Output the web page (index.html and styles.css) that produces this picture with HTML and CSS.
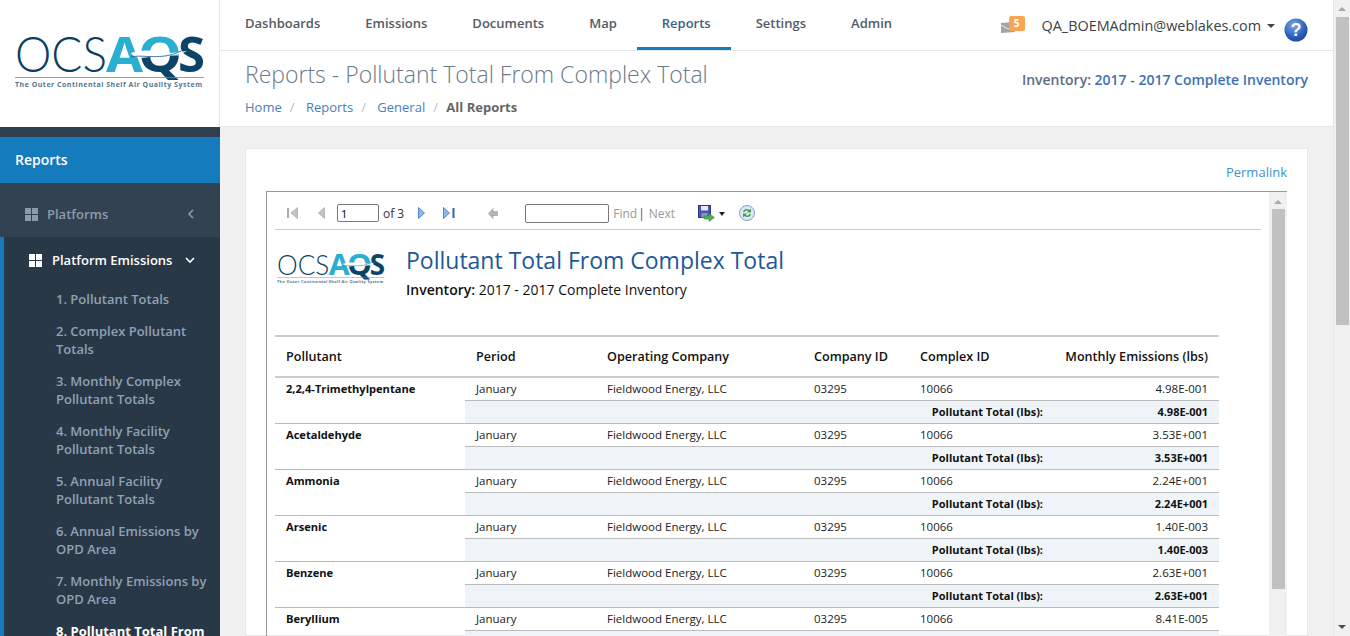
FILE: index.html
```html
<!DOCTYPE html>
<html lang="en">
<head>
  <meta charset="UTF-8" />
  <meta name="viewport" content="width=device-width, initial-scale=1" />
  <title>OCS AQS - Reports</title>
  <link rel="stylesheet" href="styles.css">
</head>
<body>
  <svg class="defs" width="0" height="0">
    <defs>
      <linearGradient id="qFill" x1="0" y1="0" x2="0" y2="1">
        <stop offset="0.55" stop-color="#2aaed2" />
        <stop offset="0.55" stop-color="#0c4467" />
      </linearGradient>
      <radialGradient id="helpFill" cx="0.4" cy="0.3" r="0.8">
        <stop offset="0" stop-color="#7fa6e6" />
        <stop offset="0.6" stop-color="#2f62bd" />
        <stop offset="1" stop-color="#173f8f" />
      </radialGradient>
      <symbol id="logo" viewBox="0 0 190 54">
        <text x="0" y="36" class="logo-ocs" textLength="92" lengthAdjust="spacingAndGlyphs">OCS</text>
        <text x="91" y="36" class="logo-a" textLength="37" lengthAdjust="spacingAndGlyphs">A</text>
        <text x="123" y="36" class="logo-q" fill="url(#qFill)" textLength="44" lengthAdjust="spacingAndGlyphs">Q</text>
        <text x="163" y="36" class="logo-s" textLength="27" lengthAdjust="spacingAndGlyphs">S</text>
        <path d="M116 17 C130 12 142 16 156 17 L172 15 C160 22 146 18 134 21 C126 23 118 21 116 17Z" fill="#fff" />
        <path d="M116 21 C128 18 146 25 166 15" fill="none" stroke="#12589a" stroke-width="0.8" />
        <rect x="0" y="41" width="189" height="0.8" fill="#6f8ba3" />
        <text x="0" y="51" class="logo-tag" textLength="187">The Outer Continental Shelf Air Quality System</text>
      </symbol>
    </defs>
  </svg>

  <div class="layout">
    <aside class="sidebar">
      <div class="brand">
        <svg class="brand-logo" width="190" height="54"><use href="#logo" /></svg>
      </div>
      <div class="side-strip"></div>
      <div class="side-title">Reports</div>
      <div class="side-group">
        <span class="tiles tiles-dim"><i></i><i></i><i></i><i></i></span>
        <span class="side-group-name">Platforms</span>
        <svg class="chev" width="8" height="10" viewBox="0 0 8 10"><path d="M6 1 L2 5 L6 9" fill="none" stroke="#8f9dab" stroke-width="1.6" /></svg>
      </div>
      <div class="side-sub">
        <div class="side-sub-head">
          <span class="tiles"><i></i><i></i><i></i><i></i></span>
          <span class="side-sub-name">Platform Emissions</span>
          <svg class="chev" width="10" height="8" viewBox="0 0 10 8"><path d="M1 2 L5 6 L9 2" fill="none" stroke="#fff" stroke-width="1.6" /></svg>
        </div>
        <a class="side-link" href="#">1. Pollutant Totals</a>
        <a class="side-link" href="#">2. Complex Pollutant Totals</a>
        <a class="side-link" href="#">3. Monthly Complex Pollutant Totals</a>
        <a class="side-link" href="#">4. Monthly Facility Pollutant Totals</a>
        <a class="side-link" href="#">5. Annual Facility Pollutant Totals</a>
        <a class="side-link" href="#">6. Annual Emissions by OPD Area</a>
        <a class="side-link" href="#">7. Monthly Emissions by OPD Area</a>
        <a class="side-link active" href="#">8. Pollutant Total From Complex Total</a>
      </div>
    </aside>

    <div class="main">
      <header class="topbar">
        <nav class="topnav">
          <a href="#">Dashboards</a>
          <a href="#">Emissions</a>
          <a href="#">Documents</a>
          <a href="#">Map</a>
          <a href="#" class="current">Reports</a>
          <a href="#">Settings</a>
          <a href="#">Admin</a>
        </nav>
        <div class="usermenu">
          <span class="mail">
            <svg width="14" height="11" viewBox="0 0 14 11"><path d="M0 1 L14 0 V10 L0 11Z" fill="#a3a3a3" /><path d="M0 3 L7 7 L14 6" fill="none" stroke="#fff" stroke-width="0.8" /></svg>
            <span class="mail-badge">5</span>
          </span>
          <span class="username">QA_BOEMAdmin@weblakes.com</span>
          <span class="caret"></span>
          <svg class="help" width="24" height="24" viewBox="0 0 24 24">
            <circle cx="12" cy="12" r="11.5" fill="url(#helpFill)" />
            <text x="12" y="18" class="help-mark">?</text>
          </svg>
        </div>
      </header>

      <div class="pagehead">
        <div>
          <h1>Reports - Pollutant Total From Complex Total</h1>
          <div class="crumbs">
            <a href="#">Home</a><span class="sep">/</span>
            <a href="#">Reports</a><span class="sep">/</span>
            <a href="#">General</a><span class="sep">/</span>
            <b>All Reports</b>
          </div>
        </div>
        <div class="inventory">Inventory: <a href="#">2017 - 2017 Complete Inventory</a></div>
      </div>

      <div class="content">
        <div class="card">
          <div class="permalink"><a href="#">Permalink</a></div>
          <div class="viewer">
            <div class="report">
              <div class="toolbar">
                <svg class="tool first" width="11" height="12" viewBox="0 0 11 12"><rect x="0" y="1" width="2" height="10" fill="#aaa" /><path d="M10.500 0.500 V11.500 L4 6Z" fill="#c4c4c4" stroke="#999" stroke-width="0.6" /></svg>
                <svg class="tool prev" width="7" height="12" viewBox="0 0 7 12"><path d="M6.500 0.500 V11.500 L0.500 6Z" fill="#c4c4c4" stroke="#999" stroke-width="0.6" /></svg>
                <input class="page-input" type="text" value="1" />
                <span class="of">of 3</span>
                <svg class="tool next" width="7" height="12" viewBox="0 0 7 12"><path d="M0.500 0.500 V11.500 L6.500 6Z" fill="#8db8f0" stroke="#2a62c0" stroke-width="0.7" /></svg>
                <svg class="tool last" width="12" height="12" viewBox="0 0 12 12"><path d="M0.500 0.500 V11.500 L6.500 6Z" fill="#8db8f0" stroke="#2a62c0" stroke-width="0.7" /><rect x="9.500" y="1" width="2" height="10" fill="#2a62c0" /></svg>
                <svg class="tool back" width="10" height="11" viewBox="0 0 10 11"><path d="M0.500 5.500 L5 0.500 V3.500 H9.500 V7.500 H5 V10.500Z" fill="#b5b5b5" stroke="#999" stroke-width="0.6" /></svg>
                <input class="find-input" type="text" />
                <span class="find">Find</span><span class="pipe">|</span><span class="find find-next">Next</span>
                <svg class="tool save" width="17" height="17" viewBox="0 0 17 17">
                  <rect x="0.500" y="0.500" width="12" height="12" fill="#4a55b0" stroke="#2d3580" />
                  <rect x="3" y="1" width="7" height="4.500" fill="#e8e8f4" />
                  <rect x="3.500" y="8" width="6" height="4.500" fill="#8a92cc" />
                  <path d="M6 11 H11 V8.500 L16.500 12.500 L11 16.500 V14 H6Z" fill="#4fb04f" stroke="#2e8030" stroke-width="0.5" />
                </svg>
                <span class="caret caret-small"></span>
                <svg class="tool refresh" width="16" height="16" viewBox="0 0 16 16">
                  <circle cx="8" cy="8" r="7.500" fill="#dbe8f8" stroke="#7f9fcf" />
                  <path d="M4 7 C4.500 4 8 3 10.500 5 L12 3.500 V7.500 H8 L9.500 6 C8 5 6 5.500 5.500 7Z" fill="#3f9f3f" />
                  <path d="M12 9 C11.500 12 8 13 5.500 11 L4 12.500 V8.500 H8 L6.500 10 C8 11 10 10.500 10.500 9Z" fill="#3f9f3f" />
                </svg>
              </div>

              <div class="report-head">
                <svg class="report-logo" width="108" height="31"><use href="#logo" /></svg>
                <div>
                  <h2>Pollutant Total From Complex Total</h2>
                  <p><b>Inventory:</b> 2017 - 2017 Complete Inventory</p>
                </div>
              </div>

              <table class="grid">
                <colgroup>
                  <col class="c-pollutant"><col class="c-period"><col class="c-company"><col class="c-cid"><col class="c-xid"><col class="c-value">
                </colgroup>
                <thead>
                  <tr><th>Pollutant</th><th>Period</th><th>Operating Company</th><th>Company ID</th><th>Complex ID</th><th class="num">Monthly Emissions (lbs)</th></tr>
                </thead>
                <tbody>
                  <tr><td class="name" rowspan="2">2,2,4-Trimethylpentane</td><td>January</td><td>Fieldwood Energy, LLC</td><td>03295</td><td>10066</td><td class="num">4.98E-001</td></tr>
                  <tr class="total"><td colspan="4">Pollutant Total (lbs):</td><td class="num">4.98E-001</td></tr>
                  <tr><td class="name" rowspan="2">Acetaldehyde</td><td>January</td><td>Fieldwood Energy, LLC</td><td>03295</td><td>10066</td><td class="num">3.53E+001</td></tr>
                  <tr class="total"><td colspan="4">Pollutant Total (lbs):</td><td class="num">3.53E+001</td></tr>
                  <tr><td class="name" rowspan="2">Ammonia</td><td>January</td><td>Fieldwood Energy, LLC</td><td>03295</td><td>10066</td><td class="num">2.24E+001</td></tr>
                  <tr class="total"><td colspan="4">Pollutant Total (lbs):</td><td class="num">2.24E+001</td></tr>
                  <tr><td class="name" rowspan="2">Arsenic</td><td>January</td><td>Fieldwood Energy, LLC</td><td>03295</td><td>10066</td><td class="num">1.40E-003</td></tr>
                  <tr class="total"><td colspan="4">Pollutant Total (lbs):</td><td class="num">1.40E-003</td></tr>
                  <tr><td class="name" rowspan="2">Benzene</td><td>January</td><td>Fieldwood Energy, LLC</td><td>03295</td><td>10066</td><td class="num">2.63E+001</td></tr>
                  <tr class="total"><td colspan="4">Pollutant Total (lbs):</td><td class="num">2.63E+001</td></tr>
                  <tr><td class="name" rowspan="2">Beryllium</td><td>January</td><td>Fieldwood Energy, LLC</td><td>03295</td><td>10066</td><td class="num">8.41E-005</td></tr>
                  <tr class="total"><td colspan="4">Pollutant Total (lbs):</td><td class="num">8.41E-005</td></tr>
                </tbody>
              </table>
            </div>
            <div class="vbar vbar-report">
              <span class="arrow-up"></span>
              <span class="thumb"></span>
            </div>
          </div>
        </div>
      </div>
    </div>

    <div class="vbar vbar-page">
      <span class="arrow-up"></span>
      <span class="thumb"></span>
      <span class="arrow-down"></span>
    </div>
  </div>
</body>
</html>
```

FILE: styles.css
```css
html, body {
  height: 100%;
}
body {
  margin: 0;
  overflow: hidden;
  font-family: "Open Sans", "Noto Sans", sans-serif;
  font-size: 13px;
  color: #333;
  background: #fff;
}
a {
  text-decoration: none;
  color: inherit;
}
.defs {
  position: absolute;
}
.layout {
  display: flex;
  height: 636px;
  overflow: hidden;
}

/* logo */
.logo-ocs {
  font-family: "Lato", "Liberation Sans", sans-serif;
  font-size: 50px;
  font-weight: 300;
  fill: #0c3f5f;
}
.logo-a, .logo-q, .logo-s {
  font-family: "Open Sans", sans-serif;
  font-size: 49px;
  font-weight: 700;
}
.logo-a {
  fill: #2aaed2;
}
.logo-s {
  fill: #0c4467;
}
.logo-tag {
  font-family: "Open Sans", sans-serif;
  font-size: 7px;
  font-weight: 700;
  fill: #55758f;
}

/* sidebar */
.sidebar {
  width: 220px;
  flex: none;
  background: #293847;
}
.brand {
  height: 127px;
  background: #fff;
  box-sizing: border-box;
  padding: 36px 0 0 15px;
  border-right: 1px solid #e6e6e6;
}
.brand-logo {
  display: block;
}
.side-strip {
  height: 10px;
  background: #2f3f4f;
}
.side-title {
  height: 46px;
  line-height: 46px;
  padding-left: 15px;
  background: #147bbd;
  color: #fff;
  font-size: 14px;
  font-weight: 600;
}
.side-group {
  height: 54px;
  box-sizing: border-box;
  display: flex;
  align-items: center;
  padding: 8px 25px 0;
  background: #324251;
  color: #8c9aa9;
  font-weight: 600;
}
.side-group-name {
  flex: 1;
  margin-left: 9px;
}
.tiles {
  display: grid;
  grid-template-columns: 6px 6px;
  gap: 1px;
}
.tiles i {
  height: 6px;
  background: #fff;
}
.tiles-dim i {
  background: #8c9aa9;
}
.side-sub {
  border-left: 4px solid #147bbd;
}
.side-sub-head {
  height: 46px;
  display: flex;
  align-items: center;
  padding: 0 25px;
  color: #fff;
  font-weight: 600;
}
.side-sub-name {
  flex: 1;
  margin-left: 10px;
  white-space: nowrap;
}
.side-link {
  display: block;
  padding: 7px 12px 7px 52px;
  line-height: 18px;
  color: #8fa1b5;
  font-weight: 600;
}
.side-link.active {
  color: #fff;
  font-weight: 700;
}

/* top */
.main {
  flex: 1;
  min-width: 0;
  display: flex;
  flex-direction: column;
}
.topbar {
  height: 50px;
  flex: none;
  display: flex;
  justify-content: space-between;
  border-bottom: 1px solid #e6e6e6;
  background: #fff;
}
.topnav {
  display: flex;
}
.topnav a {
  height: 50px;
  box-sizing: border-box;
  padding: 16px 20px 0 25px;
  line-height: 15px;
  font-weight: 600;
  color: #545b64;
}
.topnav a.current {
  color: #3f5f7f;
  border-bottom: 3px solid #147bbd;
}
.usermenu {
  display: flex;
  align-items: center;
  padding-right: 25px;
}
.mail {
  position: relative;
  display: flex;
  margin-right: 27px;
  margin-top: 4px;
}
.mail-badge {
  position: absolute;
  left: 8px;
  top: -6px;
  width: 16px;
  height: 15px;
  line-height: 15px;
  text-align: center;
  border-radius: 2px;
  background: #f8a655;
  color: #fff;
  font-size: 10px;
  font-weight: 700;
}
.username {
  font-size: 14.4px;
  color: #3b3f46;
}
.caret {
  width: 0;
  height: 0;
  margin: 1px 9px 0 6px;
  border-left: 4px solid transparent;
  border-right: 4px solid transparent;
  border-top: 4px solid #444;
}
.help {
  margin-top: 10px;
}
.help-mark {
  font-family: "Liberation Sans", sans-serif;
  font-size: 18px;
  font-weight: 700;
  fill: #fff;
  text-anchor: middle;
}

/* heading */
.pagehead {
  height: 75px;
  flex: none;
  display: flex;
  justify-content: space-between;
  padding: 0 25px;
  border-bottom: 1px solid #e6e6e6;
  background: #fff;
}
h1 {
  margin: 7px 0 0;
  font-size: 23px;
  line-height: 33px;
  font-weight: 300;
  color: #6b7a88;
}
.crumbs {
  margin-top: 7px;
  line-height: 18px;
  color: #4a7eb8;
}
.crumbs .sep {
  margin: 0 8px 0 8px;
  color: #b5bcc4;
}
.crumbs b {
  margin-left: -3px;
  font-weight: 700;
  color: #666;
}
.inventory {
  margin-top: 19px;
  font-size: 14px;
  font-weight: 600;
  color: #5e6d80;
}
.inventory a {
  color: #3c72b4;
}

/* content */
.content {
  flex: 1;
  min-height: 0;
  background: #f1f1f1;
  padding: 21px 25px 0 25px;
}
.card {
  height: 100%;
  box-sizing: border-box;
  background: #fff;
  border: 1px solid #e8e8e8;
  padding: 14px 20px 0 20px;
}
.permalink {
  height: 28px;
  line-height: 18px;
  text-align: right;
  color: #3a93d0;
}
.viewer {
  display: flex;
  height: 600px;
  border-top: 1px solid #999;
  border-left: 1px solid #999;
}
.report {
  flex: 1;
  min-width: 0;
  padding: 0 8px 0 8px;
}
.toolbar {
  height: 38px;
  box-sizing: border-box;
  padding-top: 5px;
  display: flex;
  align-items: center;
  border-bottom: 1px solid #ccc;
  font-size: 12px;
  color: #333;
}
.tool {
  flex: none;
}
.first { margin-left: 12px; }
.prev { margin-left: 20px; }
.page-input {
  width: 42px;
  height: 18px;
  margin-left: 12px;
  box-sizing: border-box;
  padding: 0 3px;
  border: 1px solid #777;
  border-radius: 2px;
  font: 11px "Open Sans", sans-serif;
}
.of { margin-left: 4px; }
.next { margin-left: 14px; }
.last { margin-left: 18px; }
.back { margin-left: 33px; }
.find-input {
  width: 84px;
  height: 19px;
  margin-left: 27px;
  box-sizing: border-box;
  border: 1px solid #777;
  border-radius: 2px;
}
.find {
  margin-left: 4px;
  color: #9a9a9a;
}
.pipe {
  margin: 0 0 0 1px;
  color: #7b2d80;
}
.find-next {
  margin-left: 4px;
}
.save { margin-left: 23px; }
.caret-small {
  margin: 2px 0 0 4px;
  border-left-width: 3px;
  border-right-width: 3px;
  border-top-color: #222;
}
.refresh { margin-left: 14px; }
.report-head {
  display: flex;
  height: 105px;
  box-sizing: border-box;
  padding: 24px 0 0 2px;
}
.report-logo {
  flex: none;
  margin-right: 21px;
}
h2 {
  margin: -10px 0 0;
  font-size: 23px;
  line-height: 32px;
  font-weight: 400;
  color: #1e5799;
}
.report-head p {
  margin: 4px 0 0;
  font-size: 14px;
  color: #111;
}
.report-head b {
  font-weight: 600;
}
.grid {
  width: 944px;
  table-layout: fixed;
  border-collapse: collapse;
  font-size: 11.5px;
  color: #222;
}
.c-pollutant { width: 190px; }
.c-period { width: 131px; }
.c-company { width: 207px; }
.c-cid { width: 106px; }
.c-xid { width: 145px; }
.c-value { width: 165px; }
.grid th {
  height: 39px;
  padding: 0 11px;
  text-align: left;
  font-size: 12.6px;
  font-weight: 600;
  color: #111;
  white-space: nowrap;
  border-top: 2px solid #ccc;
  border-bottom: 2px solid #ccc;
}
.grid td {
  height: 20px;
  padding: 0 11px 2px;
  border-bottom: 1px solid #bbb;
  white-space: nowrap;
}
.grid td.name {
  vertical-align: top;
  padding-top: 3px;
  height: auto;
  font-size: 11.1px;
  font-weight: 700;
  color: #111;
}
.grid .num {
  text-align: right;
}
.total td {
  background: #eff4f8;
  text-align: right;
  font-size: 11px;
  font-weight: 700;
  color: #111;
}

/* scrollbars */
.vbar {
  flex: none;
  display: flex;
  flex-direction: column;
  align-items: center;
  background: #f1f1f1;
}
.vbar-report {
  width: 18px;
  height: 445px;
}
.vbar-report .arrow-up {
  margin-top: 8px;
}
.vbar-report .thumb {
  height: 380px;
  margin-top: 5px;
}
.vbar-page {
  width: 17px;
  border-left: 1px solid #e6e6e6;
  box-sizing: border-box;
}
.vbar-page .thumb {
  height: 308px;
  margin-top: 6px;
}
.thumb {
  width: 13px;
  background: #c1c1c1;
}
.arrow-up {
  width: 0;
  height: 0;
  margin-top: 7px;
  border-left: 4px solid transparent;
  border-right: 4px solid transparent;
  border-bottom: 4px solid #a8a8a8;
}
.arrow-down {
  width: 0;
  height: 0;
  margin-top: auto;
  margin-bottom: 7px;
  border-left: 4px solid transparent;
  border-right: 4px solid transparent;
  border-top: 4px solid #505050;
}
```
